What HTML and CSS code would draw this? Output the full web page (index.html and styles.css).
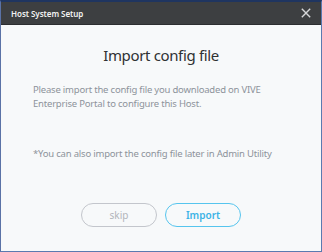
FILE: index.html
```html
<!DOCTYPE html>
<html>
<head>
<meta charset="utf-8">
<link rel="stylesheet" href="styles.css">
</head>
<body>
<div class="window">
  <div class="titlebar">
    <span class="title">Host System Setup</span>
    <svg class="close" width="10" height="10" viewBox="0 0 10 10"><path d="M0.8 0.8L9.2 9.2M9.2 0.8L0.8 9.2" stroke="#d5d6d8" stroke-width="1.4" fill="none"/></svg>
  </div>
  <div class="content">
    <h1 class="heading">Import config file</h1>
    <p class="desc">Please import the config file you downloaded on VIVE Enterprise Portal to configure this Host.</p>
    <p class="note">*You can also import the config file later in Admin Utility</p>
    <div class="actions">
      <button class="btn btn-skip">skip</button>
      <button class="btn btn-import">Import</button>
    </div>
  </div>
</div>
</body>
</html>
```
FILE: styles.css
```css
html, body {
  margin: 0;
  padding: 0;
  width: 322px;
  height: 252px;
  overflow: hidden;
  background: #3a5a94;
}
.window {
  box-sizing: border-box;
  width: 322px;
  height: 252px;
  border-top: 2px solid #1f3560;
  border-left: 1px solid #5a72a6;
  border-right: 1px solid #5a7ab0;
  border-bottom: 1px solid #5a7ab0;
  display: flex;
  flex-direction: column;
  font-family: "Noto Sans", "Open Sans", sans-serif;
}
.titlebar {
  height: 22px;
  background: #3d3f41;
  border-bottom: 1px solid #2c2e30;
  display: flex;
  align-items: center;
  justify-content: space-between;
  padding: 0 10px 0 10px;
}
.title {
  color: #f2f2f2;
  font-size: 8px;
  font-weight: 600;
  letter-spacing: -0.05px;
}
.close {
  display: block;
}
.content {
  flex: 1;
  background: #f7f9fa;
  padding: 0 32px;
  display: flex;
  flex-direction: column;
}
.heading {
  margin: 20px 0 0;
  text-align: center;
  font-size: 15px;
  font-weight: 400;
  color: #2f3133;
  line-height: 20px;
  letter-spacing: -0.35px;
}
.desc {
  margin: 18px 0 0;
  font-size: 9.5px;
  line-height: 14px;
  color: #8d939b;
  letter-spacing: -0.2px;
}
.note {
  margin: 36px 0 0;
  font-size: 9.5px;
  line-height: 14px;
  color: #8d939b;
  letter-spacing: -0.2px;
}
.actions {
  margin-top: 42px;
  display: flex;
  justify-content: center;
  gap: 8px;
}
.btn {
  box-sizing: border-box;
  width: 76px;
  height: 24px;
  border-radius: 12px;
  background: transparent;
  font-family: "Noto Sans", "Open Sans", sans-serif;
  font-size: 10px;
  padding: 0;
}
.btn-skip {
  border: 1px solid #c3c6cc;
  color: #b2b5bb;
}
.btn-import {
  border: 1px solid #56c5ee;
  color: #3cb3e6;
  font-weight: 600;
}
```
